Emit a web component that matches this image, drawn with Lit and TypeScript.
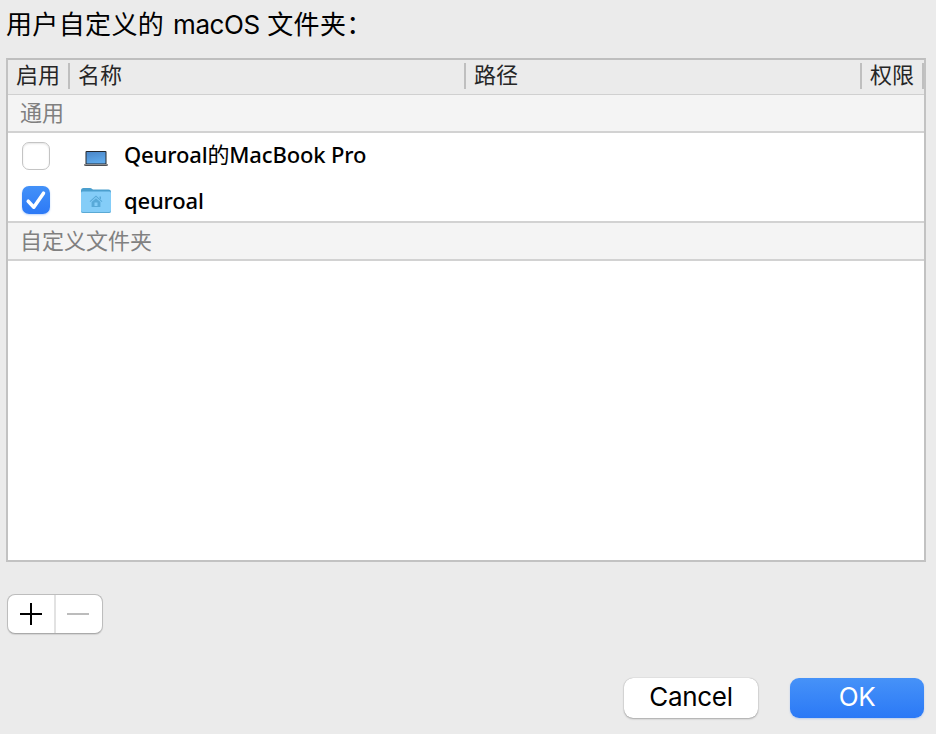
import { LitElement, html, css, svg } from "lit";
import { customElement, state } from "lit/decorators.js";

const laptop = svg`
  <defs><linearGradient id="screen" x1="0" y1="0" x2="0.3" y2="1">
    <stop offset="0" stop-color="#4b86c8"/><stop offset="1" stop-color="#5fa9ea"/>
  </linearGradient></defs>
  <rect x="5.500" y="11" width="21" height="14" rx="1" fill="#25282d"/>
  <rect x="6.500" y="12" width="19" height="11.500" fill="url(#screen)"/>
  <path d="M4 24H28V25.200Q27.500 26 26 26H6Q4.500 26 4 25.200Z" fill="#4c4d51"/>
  <path d="M4 24H28V24.900H4Z" fill="#929295"/>`;

const folder = svg`
  <path d="M1 6.500Q1 4 3.500 4H10Q11.300 4 12.200 4.900L13 5.600H28.500Q31 5.600 31 7.800V12H1Z" fill="#4b9fce"/>
  <path d="M1 9Q1 7.600 3 7.600H29Q31 7.600 31 9V27Q31 29 29 29H3Q1 29 1 27Z" fill="#84cdf8"/>
  <path d="M1 26.200V27Q1 29 3 29H29Q31 29 31 27V26.200Q31 28 29 28H3Q1 28 1 26.200Z" fill="#5aa9d4"/>
  <path d="M10 17.700L16 12.200L22 17.700" fill="none" stroke="#58a9d8" stroke-width="1.100"/>
  <path d="M19.500 12.500H21V15.600L19.500 14.200Z" fill="#58a9d8"/>
  <path fill-rule="evenodd" d="M16 14.200L20.400 18V23H11.600V18ZM14.500 18.500V22H17.500V18.500Z" fill="#58a9d8"/>`;

@customElement("app-root")
export class AppRoot extends LitElement {
  @state() private enabled = [false, true];

  static styles = css`
    :host {
      display: flex;
      flex-direction: column;
      box-sizing: border-box;
      width: 936px;
      height: 734px;
      padding: 0 10px 0 6px;
      overflow: hidden;
      background: #ebebeb;
      color: #000;
      font-family: Inter, "Noto Sans CJK SC", sans-serif;
    }
    .title {
      height: 58px;
      line-height: 50px;
      font-size: 26px;
      white-space: nowrap;
    }
    .title .han { letter-spacing: 0.35px; }
    .title .latin { letter-spacing: -0.4px; margin: 0 0.5px 0 2px; }
    .table {
      box-sizing: border-box;
      width: 920px;
      height: 504px;
      border: 2px solid #c2c2c2;
      border-top-color: #bebebe;
      background: #fff;
    }
    .head {
      display: grid;
      grid-template-columns: 62px 396px 396px 62px;
      height: 34px;
      border-bottom: 1px solid #d0d0d0;
      background: #ebebeb;
      color: #262626;
      font-size: 22px;
    }
    .cell {
      height: 26px;
      margin-top: 3px;
      padding-left: 8px;
      border-right: 2px solid #bfbfbf;
      line-height: 24px;
    }
    .section {
      box-sizing: border-box;
      height: 38px;
      padding-left: 12px;
      border-bottom: 2px solid #d2d2d2;
      background: #f4f4f4;
      color: #808080;
      font-size: 22px;
      line-height: 36px;
    }
    .section.second {
      height: 40px;
      border-top: 2px solid #d2d2d2;
    }
    .row {
      display: flex;
      align-items: center;
      height: 43px;
    }
    .row.first { height: 45px; }
    .check {
      box-sizing: border-box;
      width: 28px;
      height: 28px;
      margin: 1px 30px 0 14px;
      border: 1px solid #c4c4c4;
      border-radius: 7px;
      background: #fff;
      box-shadow: inset 0 1px 2px #0000001a;
    }
    .check.on {
      border: 0;
      margin-top: 0;
      background: linear-gradient(#4391f8, #2c79f6);
      box-shadow: 0 1px 2px #2c79f650;
    }
    .check svg, .icon { display: block; }
    .icon { width: 32px; height: 32px; }
    .name {
      margin-left: 12px;
      font: 500 22px/32px "Noto Sans", "Noto Sans CJK SC", sans-serif;
      letter-spacing: -0.15px;
      white-space: pre;
    }
    .name .han { font-weight: 400; }
    .first .name { margin-bottom: 3px; }
    .tools {
      display: flex;
      box-sizing: border-box;
      width: 96px;
      height: 40px;
      margin: 32px 0 0 1px;
      border: 1px solid #bdbdbd;
      border-bottom-color: #aaa;
      border-radius: 8px;
      background: #fff;
      box-shadow: 0 1px 1px #0000001a;
    }
    .tool { width: 46px; height: 38px; }
    .tool + .tool { border-left: 2px solid #e2e2e2; }
    .actions {
      display: flex;
      justify-content: flex-end;
      gap: 32px;
      margin: 44px 2px 0 0;
    }
    .button {
      width: 134px;
      height: 40px;
      border-radius: 9px;
      background: #fff;
      box-shadow: 0 0 1px #0005, 0 1px 2px #0004;
      font-size: 26px;
      letter-spacing: -0.3px;
      line-height: 38px;
      text-align: center;
    }
    .button.primary {
      background: linear-gradient(#4692f8, #2b79f6);
      box-shadow: 0 1px 2px #2b79f640;
      color: #fff;
    }
  `;

  private toggle(i: number) {
    this.enabled = this.enabled.map((v, n) => (n === i ? !v : v));
  }

  private row(i: number, icon: unknown, name: unknown) {
    const on = this.enabled[i];
    return html`<div class="row ${i === 0 ? "first" : ""}">
      <div class="check ${on ? "on" : ""}" @click=${() => this.toggle(i)}>
        ${on
          ? html`<svg width="28" height="28" viewBox="0 0 28 28"><path d="M6.200 15.200L11.800 21.200L21.500 7.200" fill="none" stroke="#fff" stroke-width="3.500" stroke-linecap="round" stroke-linejoin="round"/></svg>`
          : ""}
      </div>
      <svg class="icon" viewBox="0 0 32 32">${icon}</svg>
      <div class="name">${name}</div>
    </div>`;
  }

  render() {
    return html`
      <div class="title"><span class="han">用户自定义的</span><span class="latin"> macOS </span><span class="han">文件夹：</span></div>
      <div class="table">
        <div class="head">
          ${["启用", "名称", "路径", "权限"].map((t) => html`<span class="cell">${t}</span>`)}
        </div>
        <div class="section">通用</div>
        ${this.row(0, laptop, html`Qeuroal<span class="han">的</span>MacBook Pro`)}
        ${this.row(1, folder, "qeuroal")}
        <div class="section second">自定义文件夹</div>
      </div>
      <div class="tools">
        <svg class="tool" viewBox="0 0 46 38"><path d="M12 19H34M23 8V30" stroke="#000" stroke-width="2"/></svg>
        <svg class="tool" viewBox="0 0 46 38"><path d="M11 19H33" stroke="#bcbcbc" stroke-width="2"/></svg>
      </div>
      <div class="actions">
        <div class="button">Cancel</div>
        <div class="button primary">OK</div>
      </div>`;
  }
}
